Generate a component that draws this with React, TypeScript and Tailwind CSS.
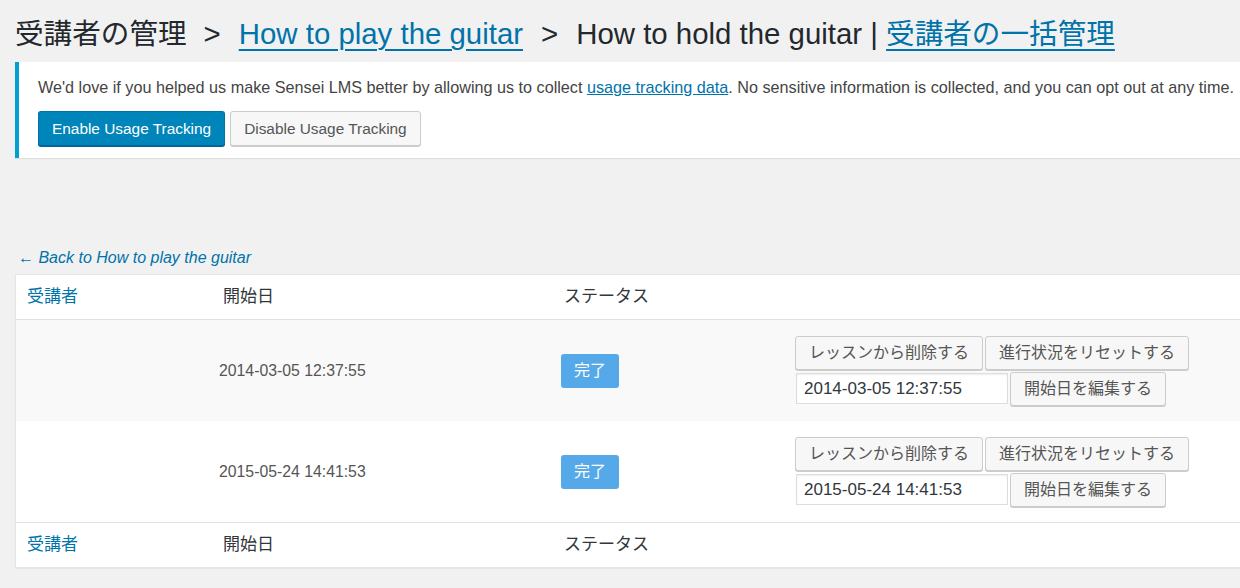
import React from "react";

const font = "font-['Liberation_Sans','Noto_Sans_CJK_JP',sans-serif]";

const rows = [
  { date: "2014-03-05 12:37:55", shade: true },
  { date: "2015-05-24 14:41:53", shade: false },
];

const WpButton = ({ children }: { children: React.ReactNode }) => (
  <button className="h-[34px] px-[13px] rounded-[3px] border border-[#cccccc] bg-[#f7f7f7] text-[16px] leading-none text-[#555555] shadow-[0_1px_0_#cccccc] whitespace-nowrap">
    {children}
  </button>
);

const HeaderRow = ({ top }: { top?: boolean }) => (
  <div
    className={`grid grid-cols-[196px_341px_231px_1fr] h-[45px] items-center bg-white text-[17px] ${
      top ? "border-b border-[#e1e1e1]" : "border-t border-[#e1e1e1]"
    }`}
  >
    <a className="pl-[11px] text-[#0073aa]">受講者</a>
    <span className="pl-[11px] text-[#32373c]">開始日</span>
    <span className="pl-[11px] text-[#32373c]">ステータス</span>
    <span />
  </div>
);

export default function App() {
  return (
    <div className={`min-h-[588px] w-full overflow-hidden bg-[#f1f1f1] ${font}`}>
      <div className="pl-[15px] w-[1260px]">
        {/* Title */}
        <h1 className="pt-[14px] text-[29.4px] leading-[40px] text-[#23282d] whitespace-nowrap font-normal">
          <span className="text-[28.6px]">受講者の管理</span>
          <span className="ml-[17px] mr-[18px]">&gt;</span>
          <a className="text-[#0073aa] underline underline-offset-[5px] decoration-[2px]">
            How to play the guitar
          </a>
          <span className="ml-[18px] mr-[18px]">&gt;</span>How to hold the guitar |{" "}
          <a className="text-[28.6px] text-[#0073aa] underline underline-offset-[5px] decoration-[2px]">
            受講者の一括管理
          </a>
        </h1>

        {/* Notice */}
        <div className="mt-[8px] bg-white border-l-[4px] border-[#00a0d2] shadow-[0_1px_1px_rgba(0,0,0,0.08)] pl-[19px] pt-[15px] pb-[12px]">
          <p className="text-[16.2px] leading-[20px] text-[#444444] whitespace-nowrap">
            We'd love if you helped us make Sensei LMS better by allowing us to collect{" "}
            <a className="text-[#0073aa] underline">usage tracking data</a>. No sensitive
            information is collected, and you can opt out at any time.
          </p>
          <div className="mt-[14px] flex gap-[5px]">
            <button className="h-[35px] px-[13px] rounded-[3px] border border-[#0073aa] border-b-[#006799] bg-[#0085ba] text-[15.4px] text-white shadow-[0_1px_0_#006799]">
              Enable Usage Tracking
            </button>
            <button className="h-[35px] px-[13px] rounded-[3px] border border-[#cccccc] bg-[#f7f7f7] text-[15.4px] text-[#555555] shadow-[0_1px_0_#cccccc]">
              Disable Usage Tracking
            </button>
          </div>
        </div>

        {/* Back link */}
        <div className="mt-[90px] pl-[3px] h-[20px] leading-[20px] text-[16px] italic text-[#0073aa]">
          ← Back to How to play the guitar
        </div>

        {/* Table */}
        <div className="mt-[6px] border border-[#e5e5e5] shadow-[0_1px_1px_rgba(0,0,0,0.04)]">
          <HeaderRow top />
          {rows.map((r) => (
            <div
              key={r.date}
              className={`grid grid-cols-[196px_341px_231px_1fr] items-center h-[101px] ${
                r.shade ? "bg-[#f9f9f9]" : "bg-white"
              }`}
            >
              <span />
              <span className="pl-[7px] text-[15.8px] text-[#555555]">{r.date}</span>
              <span className="pl-[8px]">
                <span className="inline-flex items-center justify-center w-[58px] h-[34px] rounded-[3px] bg-[#55a9e9] text-white text-[16px]">
                  完了
                </span>
              </span>
              <div className="pl-[11px] flex flex-col gap-[2px]">
                <div className="flex gap-[2px]">
                  <WpButton>レッスンから削除する</WpButton>
                  <WpButton>進行状況をリセットする</WpButton>
                </div>
                <div className="flex items-center gap-[2px]">
                  <input
                    readOnly
                    value={r.date}
                    className="ml-[1px] w-[212px] h-[31px] px-[7px] border border-[#dddddd] bg-white text-[17px] text-[#32373c] shadow-[inset_0_1px_2px_rgba(0,0,0,0.07)] outline-none"
                  />
                  <WpButton>開始日を編集する</WpButton>
                </div>
              </div>
            </div>
          ))}
          <HeaderRow />
        </div>
      </div>
    </div>
  );
}
